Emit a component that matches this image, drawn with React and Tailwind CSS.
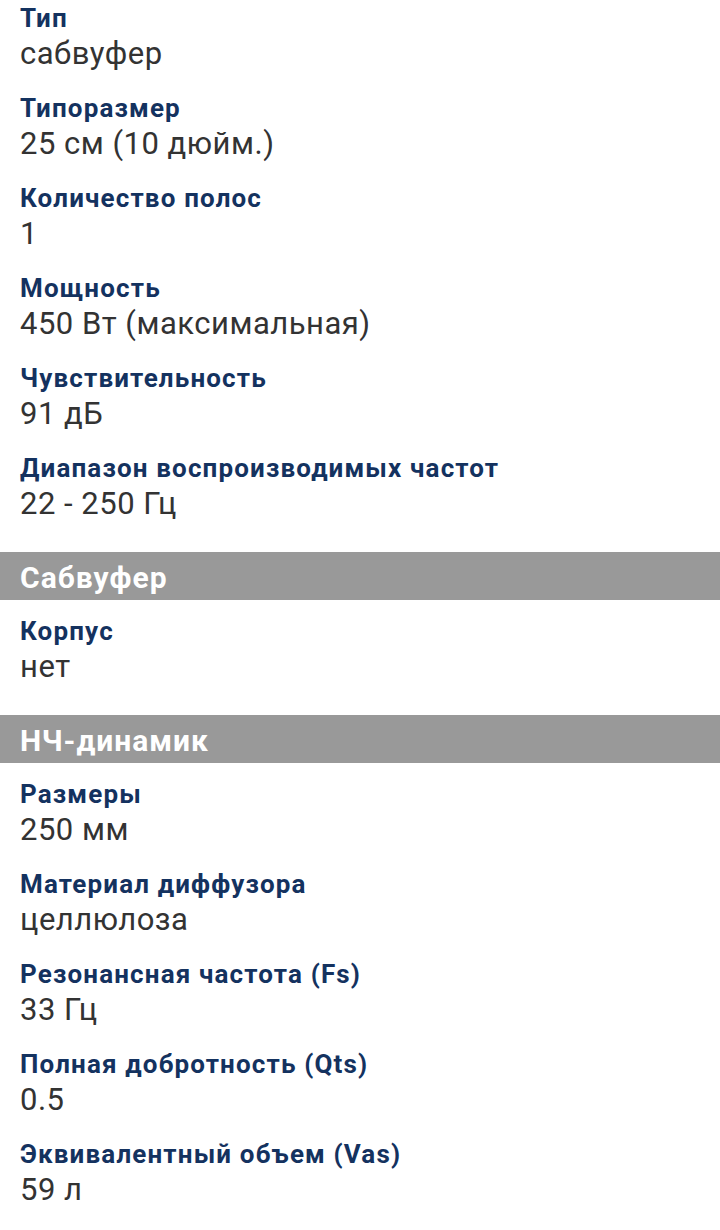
import React from "react";

const sections = [
  {
    title: null,
    items: [
      ["Тип", "сабвуфер"],
      ["Типоразмер", "25 см (10 дюйм.)"],
      ["Количество полос", "1"],
      ["Мощность", "450 Вт (максимальная)"],
      ["Чувствительность", "91 дБ"],
      ["Диапазон воспроизводимых частот", "22 - 250 Гц"],
    ],
  },
  {
    title: "Сабвуфер",
    items: [["Корпус", "нет"]],
  },
  {
    title: "НЧ-динамик",
    items: [
      ["Размеры", "250 мм"],
      ["Материал диффузора", "целлюлоза"],
      ["Резонансная частота (Fs)", "33 Гц"],
      ["Полная добротность (Qts)", "0.5"],
      ["Эквивалентный объем (Vas)", "59 л"],
    ],
  },
];

export default function App() {
  return (
    <div className="w-[720px] h-[1230px] overflow-hidden bg-white" style={{ fontFamily: "Roboto, 'Noto Sans', sans-serif" }}>
      <div className="-mt-[13px]">
        {sections.map((s, i) => (
          <div key={i}>
            {s.title && (
              <div className="h-[48px] bg-[#999999] px-5 pt-[3px] flex items-center text-white font-bold text-[30px] leading-[34px] tracking-[1px]">
                {s.title}
              </div>
            )}
            <div className="pb-[25px]">
              {s.items.map(([l, v]) => (
                <div key={l} className="h-[90px] px-5 pt-[16px]">
                  <div className="text-[26px] leading-[30px] font-bold tracking-[1.15px] text-[#14325f] whitespace-nowrap">{l}</div>
                  <div className="mt-[3px] text-[31px] leading-[36px] tracking-[0.5px] text-[#333333] whitespace-nowrap">{v}</div>
                </div>
              ))}
            </div>
          </div>
        ))}
      </div>
    </div>
  );
}
